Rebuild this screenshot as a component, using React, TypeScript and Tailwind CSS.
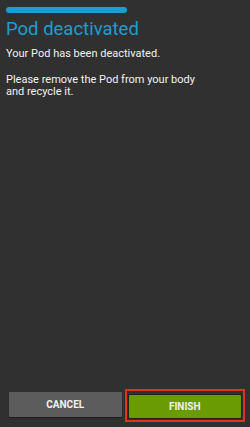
export default function App() {
  return (
    <div
      className="flex h-screen w-full flex-col bg-[#303030] text-[#f2f2f2]"
      style={{ fontFamily: 'Roboto, "Liberation Sans", sans-serif' }}
    >
      <div className="flex-1 px-[6px] pt-[7px]">
        <div className="h-[6px] w-[121px] rounded-full bg-[#1a9fd4]" />
        <h1 className="mt-[5px] text-[18.5px] leading-[22px] text-[#1a9fd4]">Pod deactivated</h1>
        <p className="mt-[8px] text-[11px] leading-[12px]">Your Pod has been deactivated.</p>
        <p className="mt-[14px] text-[11px] leading-[12px]">
          Please remove the Pod from your body
          <br />
          and recycle it.
        </p>
      </div>
      <div className="flex gap-[6px] pb-[8px] pl-[9px] pr-[8px]">
        <button className="h-[25px] flex-1 rounded-[1px] bg-[#5c5c5c] text-[10px] font-bold uppercase shadow-[0_1px_1px_rgba(0,0,0,0.4)]">
          Cancel
        </button>
        <div className="flex-1 p-[1px] outline-2 outline-[#e0321c] outline-offset-[1px]">
          <button className="h-[23px] w-full rounded-[1px] bg-[#6b9b02] text-[10px] font-bold uppercase shadow-[0_0_0_1px_rgba(0,0,0,0.3)]">
            Finish
          </button>
        </div>
      </div>
    </div>
  );
}
